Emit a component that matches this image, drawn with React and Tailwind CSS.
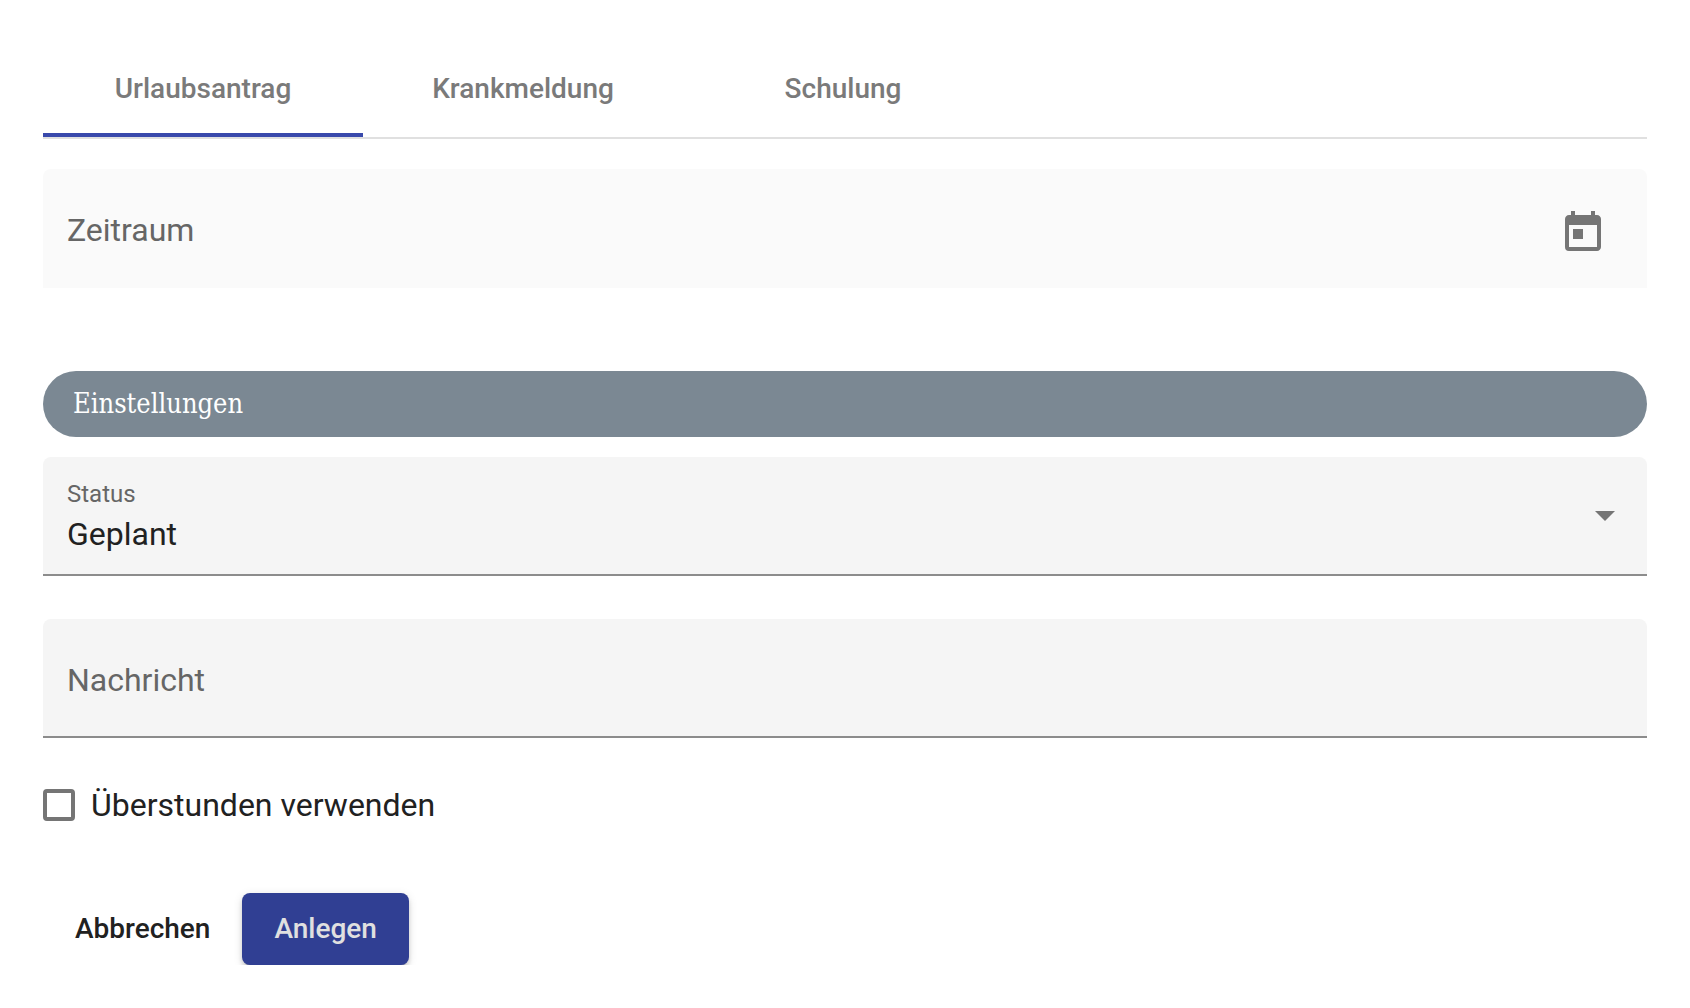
import { useState } from 'react';
import { MdToday } from 'react-icons/md';

const tabs = ['Urlaubsantrag', 'Krankmeldung', 'Schulung'];

function App() {
  const [activeTab, setActiveTab] = useState('Urlaubsantrag');
  const [form, setForm] = useState({
    zeitraum: '',
    status: 'Geplant',
    nachricht: '',
    ueberstunden: false
  });

  const handleChange = (e) => {
    const { name, type, checked, value } = e.target;
    setForm({ ...form, [name]: type === 'checkbox' ? checked : value });
  };

  return (
    <div className="bg-white px-[43px] pt-[41px] font-['Roboto',sans-serif] text-[#212121]">
      {/* Tabs */}
      <div role="tablist" className="flex border-b-2 border-[#e0e0e0]">
        {tabs.map((tab) => (
          <button
            key={tab}
            type="button"
            role="tab"
            aria-selected={tab === activeTab}
            onClick={() => setActiveTab(tab)}
            className={
              tab === activeTab
                ? 'h-24 w-80 pt-1 border-b-4 border-[#3949ab] text-[28px] font-medium text-[#7a7a7a]'
                : 'h-24 w-80 pt-1 border-b-4 border-transparent text-[28px] font-medium text-[#7a7a7a]'
            }
          >
            {tab}
          </button>
        ))}
      </div>

      <form onSubmit={(e) => e.preventDefault()} className="overflow-hidden pt-[30px]">
        {/* Date range */}
        <div className="flex h-[119px] items-center rounded-t-lg border-b-2 border-[#fafafa] bg-[#fafafa] pl-6 pr-10">
          <div className="grid min-w-0 flex-1 items-center pt-1 text-[32px] leading-12">
            <input
              id="zeitraum"
              type="text"
              name="zeitraum"
              value={form.zeitraum}
              onChange={handleChange}
              className="col-start-1 row-start-1 w-full bg-transparent outline-none"
            />
            <label
              htmlFor="zeitraum"
              className={form.zeitraum ? 'hidden' : 'col-start-1 row-start-1 cursor-text text-[#666666]'}
            >
              Zeitraum
            </label>
          </div>
          <button type="button" aria-label="Kalender öffnen" className="pt-2.5 text-[#757575]">
            <MdToday className="size-12" />
          </button>
        </div>

        <h2 className="mt-[83px] flex h-[66px] items-center rounded-full bg-[#7b8893] px-[30px] font-['DejaVu_Serif_Condensed','DejaVu_Serif',serif] text-[27px] text-white">
          Einstellungen
        </h2>

        {/* Status */}
        <div className="mt-5 flex h-[119px] items-center rounded-t-lg border-b-2 border-[#8c8c8c] bg-[#f5f5f5] pl-6 pr-8">
          <div className="flex min-w-0 flex-1 flex-col pt-1">
            <label htmlFor="status" className="text-2xl leading-8 text-[#666666]">Status</label>
            <select
              id="status"
              name="status"
              value={form.status}
              onChange={handleChange}
              className="w-full appearance-none bg-transparent text-[32px] leading-12 outline-none"
            >
              <option>Geplant</option>
              <option>Beantragt</option>
              <option>Genehmigt</option>
            </select>
          </div>
          <svg viewBox="0 0 20 10" className="h-[10px] w-5 fill-[#757575]" aria-hidden="true">
            <path d="M0 0h20L10 10z" />
          </svg>
        </div>

        {/* Message */}
        <div className="mt-[43px] flex h-[119px] items-center rounded-t-lg border-b-2 border-[#8c8c8c] bg-[#f5f5f5] px-6">
          <div className="grid min-w-0 flex-1 items-center pt-1 text-[32px] leading-12">
            <input
              id="nachricht"
              type="text"
              name="nachricht"
              value={form.nachricht}
              onChange={handleChange}
              className="col-start-1 row-start-1 w-full bg-transparent outline-none"
            />
            <label
              htmlFor="nachricht"
              className={form.nachricht ? 'hidden' : 'col-start-1 row-start-1 cursor-text text-[#666666]'}
            >
              Nachricht
            </label>
          </div>
        </div>

        <div className="mt-[43px] flex h-12 items-center gap-4">
          <input
            id="ueberstunden"
            type="checkbox"
            name="ueberstunden"
            checked={form.ueberstunden}
            onChange={handleChange}
            className="size-8 appearance-none rounded-sm border-4 border-[#757575] checked:bg-[#3949ab]"
          />
          <label htmlFor="ueberstunden" className="text-[32px] leading-12">
            Überstunden verwenden
          </label>
        </div>

        {/* Actions */}
        <div className="mt-16 flex">
          <button type="button" className="h-[72px] rounded-lg px-8 text-[28px] font-medium">
            Abbrechen
          </button>
          <button
            type="submit"
            className="h-[72px] rounded-lg bg-[#303f93] px-8 text-[28px] font-medium text-[#e0e0e0] shadow-[0_6px_2px_-4px_rgba(0,0,0,0.2),0_4px_4px_rgba(0,0,0,0.14),0_2px_10px_rgba(0,0,0,0.12)]"
          >
            Anlegen
          </button>
        </div>
      </form>
    </div>
  );
}

export default App;
